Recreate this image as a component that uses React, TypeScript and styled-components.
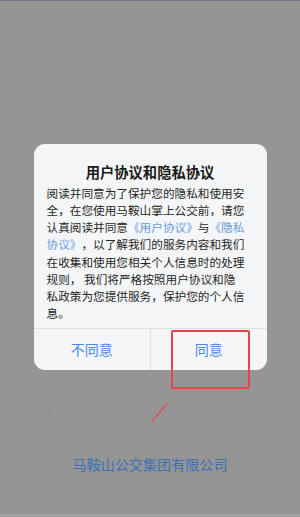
import React from "react";
import styled, { createGlobalStyle } from "styled-components";

const Global = createGlobalStyle`
  html, body { margin: 0; padding: 0; }
  body {
    width: 300px;
    height: 517px;
    overflow: hidden;
    font-family: "Noto Sans CJK SC", "Noto Sans", sans-serif;
    text-spacing-trim: space-all;
  }
`;

const Page = styled.div`
  position: relative;
  width: 300px;
  height: 517px;
  background: #959595;
  display: flex;
  flex-direction: column;
  align-items: center;
  overflow: hidden;
`;

const TopStripe = styled.div`
  align-self: stretch;
  height: 1px;
  background: #6d7b8e;
`;

const BottomStripe = styled.div`
  align-self: stretch;
  margin-top: auto;
  height: 3px;
  background: #a2a2a2;
  border-top: 1px solid #8e8e8e;
`;

const Dialog = styled.div`
  margin-top: 143px;
  width: 233px;
  background: #f5f6f8;
  border-radius: 11px;
  display: flex;
  flex-direction: column;
  overflow: hidden;
`;

const Title = styled.div`
  padding-top: 18px;
  font-size: 14.3px;
  line-height: 20px;
  font-weight: 700;
  color: #1a1a1a;
  text-align: center;
`;

const Body = styled.div`
  padding: 2px 0 7px 13px;
  font-size: 11.65px;
  line-height: 17.15px;
  color: #262626;
  width: 17.1em;
  word-break: break-all;
`;

const Link = styled.span`
  color: #6a9ce0;
`;

const Buttons = styled.div`
  display: grid;
  grid-template-columns: 1fr 1fr;
  border-top: 1px solid #dedfe2;
  height: 41px;
`;

const Button = styled.div<{ $divider?: boolean }>`
  display: flex;
  align-items: center;
  justify-content: center;
  font-size: 14px;
  color: #4a8bea;
  border-left: ${(p) => (p.$divider ? "1px solid #dedfe2" : "none")};
  padding-bottom: 1px;
`;

const Company = styled.div`
  margin-top: 84px;
  font-size: 14.1px;
  line-height: 20px;
  color: #3b70b4;
`;

const Highlight = styled.div`
  position: absolute;
  left: 171px;
  top: 330px;
  width: 75px;
  height: 55px;
  border: 2px solid #e84444;
  border-radius: 2px;
`;

const Annotation = styled.svg`
  position: absolute;
  left: 0;
  top: 0;
  pointer-events: none;
`;

export default function App() {
  return (
    <>
      <Global />
      <Page>
        <TopStripe />
        <Dialog>
          <Title>用户协议和隐私协议</Title>
          <Body>
            阅读并同意为了保护您的隐私和使用安全，在您使用马鞍山掌上公交前，请您认真阅读并同意
            <Link>《用户协议》</Link>与<Link>《隐私</Link>
            <Link>协议》</Link>，以了解我们的服务内容和我们在收集和使用您相关个人信息时的处理规则， 我们将严格按照用户协议和隐私政策为您提供服务，保护您的个人信息。
          </Body>
          <Buttons>
            <Button>不同意</Button>
            <Button $divider>同意</Button>
          </Buttons>
        </Dialog>
        <Company>马鞍山公交集团有限公司</Company>
        <BottomStripe />
        <Highlight />
        <Annotation width="300" height="517" viewBox="0 0 300 517">
          <line x1="167" y1="404" x2="152" y2="421" stroke="#e04848" strokeWidth="1.2" strokeLinecap="round" />
          <circle cx="50" cy="414" r="0.6" fill="#444" />
        </Annotation>
      </Page>
    </>
  );
}
